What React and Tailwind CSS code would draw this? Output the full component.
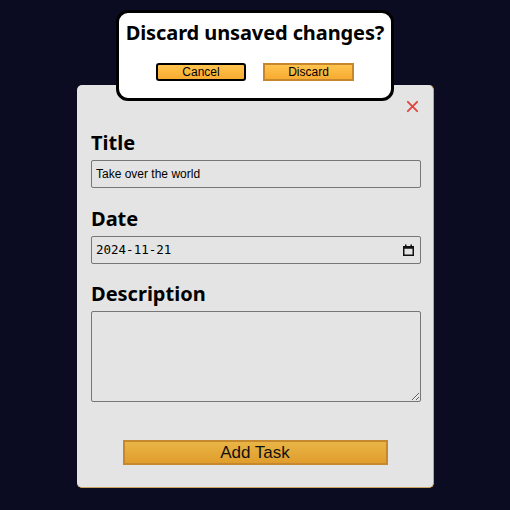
import React from 'react';

const heading = { fontFamily: '"Noto Sans", sans-serif' };

export default function App() {
  return (
    <div className="relative w-[510px] h-[510px] bg-[#0b0b22] overflow-hidden" style={{ fontFamily: '"Liberation Sans", Arial, sans-serif' }}>
      {/* Task form panel */}
      <div className="absolute left-[77px] top-[85px] w-[357px] h-[403px] bg-[#e4e4e4] rounded-[5px] border-b border-r border-[#c9a561] px-[14px]">
        <button className="absolute right-[14px] top-[15px] text-[#e0453f]">
          <svg width="13" height="13" viewBox="0 0 14 14" stroke="currentColor" strokeWidth="2" strokeLinecap="round">
            <path d="M2 2 L12 12 M12 2 L2 12" />
          </svg>
        </button>
        <form className="flex flex-col pt-[45px]">
          <label className="text-[20px] font-bold text-black leading-[26px]" style={heading}>Title</label>
          <input
            type="text"
            defaultValue="Take over the world"
            className="mt-[4px] h-[28px] w-[330px] border border-[#767676] rounded-[2px] bg-transparent px-[4px] text-[12px] text-black"
          />
          <label className="mt-[18px] text-[20px] font-bold text-black leading-[26px]" style={heading}>Date</label>
          <div className="mt-[4px] h-[28px] w-[330px] border border-[#767676] rounded-[2px] flex items-center justify-between pl-[4px] pr-[6px]">
            <span className="text-[12.5px] text-black" style={{ fontFamily: '"DejaVu Sans Mono", monospace' }}>2024-11-21</span>
            <svg width="11" height="12" viewBox="0 0 11 12">
              <rect x="0.75" y="2.75" width="9.5" height="8.5" fill="none" stroke="#111" strokeWidth="1.5" />
              <rect x="0.75" y="2.75" width="9.5" height="2" fill="#111" />
              <rect x="2" y="0.5" width="1.5" height="3" fill="#111" />
              <rect x="7.5" y="0.5" width="1.5" height="3" fill="#111" />
            </svg>
          </div>
          <label className="mt-[17px] text-[20px] font-bold text-black leading-[26px]" style={heading}>Description</label>
          <textarea
            className="mt-[4px] h-[91px] w-[330px] border border-[#767676] rounded-[2px] bg-transparent resize-y"
          />
          <button
            type="button"
            className="mt-[38px] self-center w-[265px] h-[25px] bg-gradient-to-b from-[#e8b545] to-[#e09d2c] border-2 border-[#c6882f] text-[17px] leading-none text-[#111]"
          >
            Add Task
          </button>
        </form>
      </div>

      {/* Confirm dialog */}
      <div className="absolute left-[116px] top-[10px] w-[278px] h-[91px] bg-white border-[3px] border-black rounded-[12px] flex flex-col items-center">
        <h2 className="mt-[7px] whitespace-nowrap text-[20px] font-bold text-black leading-[26px] tracking-[-0.1px]" style={heading}>
          Discard unsaved changes?
        </h2>
        <div className="mt-[17px] flex gap-[17px]">
          <button className="w-[90px] h-[18px] bg-gradient-to-b from-[#ffc44d] to-[#f8ab30] border-2 border-black rounded-[3px] text-[12px] leading-none text-black">
            Cancel
          </button>
          <button className="w-[91px] h-[18px] bg-gradient-to-b from-[#ffc44d] to-[#f8ab30] border-2 border-[#c7872f] text-[12px] leading-none text-black">
            Discard
          </button>
        </div>
      </div>
    </div>
  );
}
